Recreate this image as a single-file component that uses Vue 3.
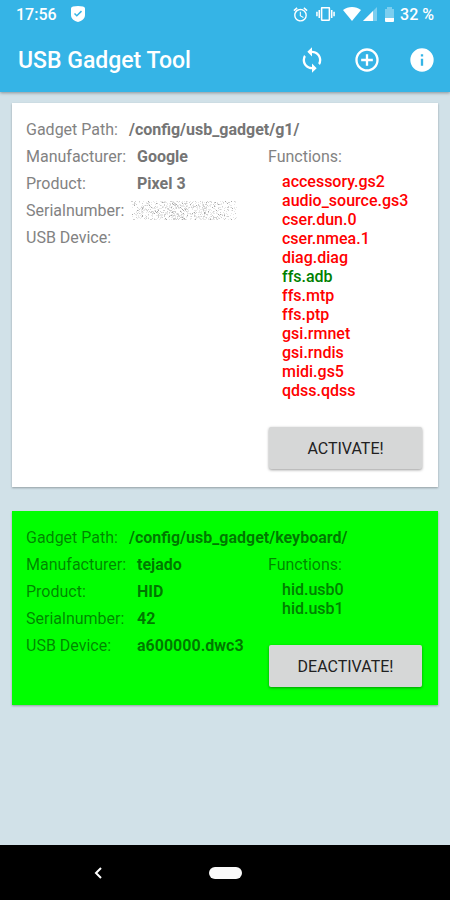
<script setup>
const gadgets = [
  {
    path: '/config/usb_gadget/g1/',
    active: false,
    details: [
      { label: 'Manufacturer:', value: 'Google' },
      { label: 'Product:', value: 'Pixel 3' },
      { label: 'Serialnumber:', hidden: true },
      { label: 'USB Device:', value: '' },
    ],
    functions: [
      'accessory.gs2',
      'audio_source.gs3',
      'cser.dun.0',
      'cser.nmea.1',
      'diag.diag',
      'ffs.adb',
      'ffs.mtp',
      'ffs.ptp',
      'gsi.rmnet',
      'gsi.rndis',
      'midi.gs5',
      'qdss.qdss',
    ],
    enabled: ['ffs.adb'],
  },
  {
    path: '/config/usb_gadget/keyboard/',
    active: true,
    details: [
      { label: 'Manufacturer:', value: 'tejado' },
      { label: 'Product:', value: 'HID' },
      { label: 'Serialnumber:', value: '42' },
      { label: 'USB Device:', value: 'a600000.dwc3' },
    ],
    functions: ['hid.usb0', 'hid.usb1'],
    enabled: ['hid.usb0', 'hid.usb1'],
  },
]

// Speckle that hides the serial number, in three shades of grey.
function speckle(seed, count) {
  let s = seed
  const next = () => {
    s = (s * 16807) % 2147483647
    return s / 2147483647
  }
  let d = ''
  for (let i = 0; i < count; i++) {
    const spread = (next() + next()) / 2
    const x = Math.floor((next() < 0.5 ? spread : next()) * 106)
    const y = Math.floor(next() * 19)
    d += `M${x} ${y}h1v1h-1z`
  }
  return d
}
const speckles = [
  { tone: 'faint', d: speckle(7123, 600) },
  { tone: 'soft', d: speckle(4211, 280) },
  { tone: 'strong', d: speckle(90210, 60) },
]
</script>

<template>
  <div class="screen">
    <header class="top">
      <div class="status">
        <span class="clock">17:56</span>
        <svg class="shield" viewBox="0 0 14 16" aria-hidden="true">
          <path fill="#fff" d="M2 .4Q7-.4 12 .4q2 .3 2 2V9c0 3.500-3 6-7 7-4-1-7-3.500-7-7V2.400q0-1.700 2-2z" />
          <path fill="none" stroke="#35b4e6" stroke-width="1.500" d="m3.500 7.500 2.300 2.300 4.700-4.700" />
        </svg>
        <span class="spacer"></span>
        <svg class="alarm" viewBox="0 0 24 24" aria-hidden="true">
          <path fill="#fff" d="m22 5.720-4.600-3.860-1.290 1.530 4.600 3.860L22 5.720zM7.880 3.390 6.600 1.860 2 5.710l1.290 1.530 4.590-3.850zM12.500 8H11v6l4.750 2.850.75-1.230-4-2.370V8zM12 4c-4.970 0-9 4.030-9 9s4.020 9 9 9a9 9 0 0 0 0-18zm0 16c-3.870 0-7-3.130-7-7s3.130-7 7-7 7 3.130 7 7-3.130 7-7 7z" />
        </svg>
        <svg class="vibrate" viewBox="0 0 24 18" aria-hidden="true">
          <path fill="#fff" d="M0 12h2V6H0v6zm3 2h2V4H3v10zm19-8v6h2V6h-2zm-3 8h2V4h-2v10zM16.500 0h-9C6.670 0 6 .67 6 1.500v15c0 .83.67 1.500 1.500 1.500h9c.83 0 1.500-.67 1.500-1.500v-15c0-.83-.67-1.500-1.500-1.500zM16 16H8V2h8v14z" />
        </svg>
        <svg class="wifi" viewBox="0 0 18 14" aria-hidden="true">
          <path fill="#fff" d="M9 14 0 3C5-1 13-1 18 3z" />
        </svg>
        <svg class="signal" viewBox="0 0 14 14" aria-hidden="true">
          <path fill="#fff" opacity=".35" d="M14 0v14H0z" />
          <path fill="#fff" d="M10 4v10H0z" />
        </svg>
        <svg class="battery" viewBox="0 0 9 15" aria-hidden="true">
          <path fill="#fff" opacity=".35" d="M0 2h2V0h5v2h2v9H0z" />
          <path fill="#fff" d="M0 11h9v3q0 1-1 1H1q-1 0-1-1z" />
        </svg>
        <span class="charge">32 %</span>
      </div>
      <div class="toolbar">
        <h1>USB Gadget Tool</h1>
        <nav class="actions">
          <button type="button" aria-label="Refresh">
            <svg viewBox="0 0 24 24"><path fill="#fff" d="M12 4V1L8 5l4 4V6c3.310 0 6 2.690 6 6 0 1.010-.25 1.970-.7 2.800l1.460 1.460A7.930 7.930 0 0 0 20 12c0-4.420-3.580-8-8-8zm0 14c-3.310 0-6-2.690-6-6 0-1.010.25-1.970.7-2.800L5.240 7.740A7.930 7.930 0 0 0 4 12c0 4.420 3.580 8 8 8v3l4-4-4-4v3z" /></svg>
          </button>
          <button type="button" aria-label="Add gadget">
            <svg viewBox="0 0 24 24"><path fill="#fff" d="M13 7h-2v4H7v2h4v4h2v-4h4v-2h-4V7zm-1-5a10 10 0 1 0 0 20 10 10 0 0 0 0-20zm0 18c-4.410 0-8-3.590-8-8s3.590-8 8-8 8 3.590 8 8-3.590 8-8 8z" /></svg>
          </button>
          <button type="button" aria-label="About">
            <svg viewBox="0 0 24 24"><path fill="#fff" d="M12 2a10 10 0 1 0 0 20 10 10 0 0 0 0-20zm1 15h-2v-6h2v6zm0-8h-2V7h2v2z" /></svg>
          </button>
        </nav>
      </div>
    </header>

    <main class="list">
      <section v-for="g in gadgets" :key="g.path" class="card" :class="{ active: g.active }">
        <p class="path"><span class="label">Gadget Path:</span><b>{{ g.path }}</b></p>
        <div class="columns">
          <dl class="details">
            <div v-for="d in g.details" :key="d.label" class="row">
              <dt class="label">{{ d.label }}</dt>
              <dd v-if="d.hidden" class="masked">
                <svg viewBox="0 0 106 19" shape-rendering="crispEdges" aria-hidden="true">
                  <path v-for="s in speckles" :key="s.tone" :class="s.tone" :d="s.d" />
                </svg>
              </dd>
              <dd v-else>{{ d.value }}</dd>
            </div>
          </dl>
          <div class="side">
            <h2 class="label">Functions:</h2>
            <ul>
              <li v-for="f in g.functions" :key="f" :class="{ on: g.enabled.includes(f) }">{{ f }}</li>
            </ul>
            <button type="button" class="toggle">{{ g.active ? 'DEACTIVATE!' : 'ACTIVATE!' }}</button>
          </div>
        </div>
      </section>
    </main>

    <footer class="navbar">
      <button type="button" class="backward" aria-label="Back">
        <svg class="back" viewBox="0 0 8 12"><path fill="none" stroke="#fff" stroke-width="2" d="M7 1 2 6l5 5" /></svg>
      </button>
      <button type="button" class="home" aria-label="Home"><span class="pill"></span></button>
    </footer>
  </div>
</template>

<style>
body {
  margin: 0;
  background: #d1e1e8;
}
</style>

<style scoped>
.screen {
  display: flex;
  flex-direction: column;
  min-height: 100vh;
  background: #d1e1e8;
  color: #757575;
  font-family: Roboto, sans-serif;
  font-size: 16px;
}
button {
  margin: 0;
  padding: 0;
  border: 0;
  background: none;
  font: inherit;
  cursor: pointer;
}
svg {
  display: block;
}
.top {
  background: #35b4e6;
  color: #fff;
  box-shadow: 0 1px 3px rgba(0, 0, 0, 0.35);
}
.status {
  display: flex;
  align-items: center;
  height: 28px;
  padding: 0 16px;
  font-weight: 500;
}
.spacer {
  flex: 1;
}
.shield {
  width: 14px;
  height: 16px;
  margin-left: 14px;
}
.alarm {
  width: 17px;
  height: 17px;
}
.vibrate {
  width: 19px;
  height: 14px;
  margin-left: 7px;
}
.wifi {
  width: 18px;
  height: 14px;
  margin-left: 8px;
}
.signal {
  width: 14px;
  height: 14px;
  margin-left: 2px;
}
.battery {
  width: 9px;
  height: 15px;
  margin: 0 6px 0 8px;
}
.toolbar {
  display: flex;
  align-items: center;
  justify-content: space-between;
  height: 64px;
  padding: 0 14px 0 18px;
}
h1 {
  margin: 0;
  font-size: 23px;
  font-weight: 500;
}
.actions {
  display: flex;
  gap: 27px;
}
.actions svg {
  width: 28px;
  height: 28px;
}
.list {
  flex: 1;
  display: flex;
  flex-direction: column;
  gap: 24px;
  padding: 11px 12px;
}
.card {
  padding: 13px 14px 18px;
  background: #fff;
  box-shadow: 0 1px 2px rgba(0, 0, 0, 0.3);
}
.card.active {
  background: #0f0;
  color: rgba(0, 0, 0, 0.54);
}
.path,
.row,
h2 {
  margin: 0;
  line-height: 27px;
}
.path b,
dd {
  font-weight: 700;
}
.label {
  font-size: 16px;
  font-weight: 400;
  opacity: 0.9;
}
.path {
  display: flex;
  gap: 11px;
}
.columns {
  display: grid;
  grid-template-columns: 242px 1fr;
}
.details {
  margin: 0;
}
.row {
  display: grid;
  grid-template-columns: 111px 1fr;
  height: 27px;
}
dd {
  margin: 0;
}
.masked {
  display: flex;
  align-items: center;
  margin-left: -6px;
}
.masked svg {
  width: 106px;
  height: 19px;
}
.faint {
  fill: #e8e8e8;
}
.soft {
  fill: #cfcfcf;
}
.strong {
  fill: #a8a8a8;
}
.side {
  display: flex;
  flex-direction: column;
}
ul {
  margin: 2px 0 0;
  padding: 0 0 0 14px;
  list-style: none;
}
li {
  color: #f00;
  font-weight: 500;
  line-height: 19px;
}
li.on {
  color: #008000;
}
.toggle {
  height: 42px;
  margin: 27px 2px 0 1px;
  border-radius: 2px;
  background: #d6d7d7;
  color: #212121;
  box-shadow: 0 1px 3px rgba(0, 0, 0, 0.4);
}
.navbar {
  display: grid;
  grid-template-columns: 1fr auto 1fr;
  align-items: center;
  height: 55px;
  background: #000;
}
.backward {
  justify-self: center;
  padding-right: 13px;
}
.back {
  width: 8px;
  height: 12px;
}
.pill {
  display: block;
  width: 33px;
  height: 12px;
  border-radius: 6px;
  background: #fafafa;
}
</style>
